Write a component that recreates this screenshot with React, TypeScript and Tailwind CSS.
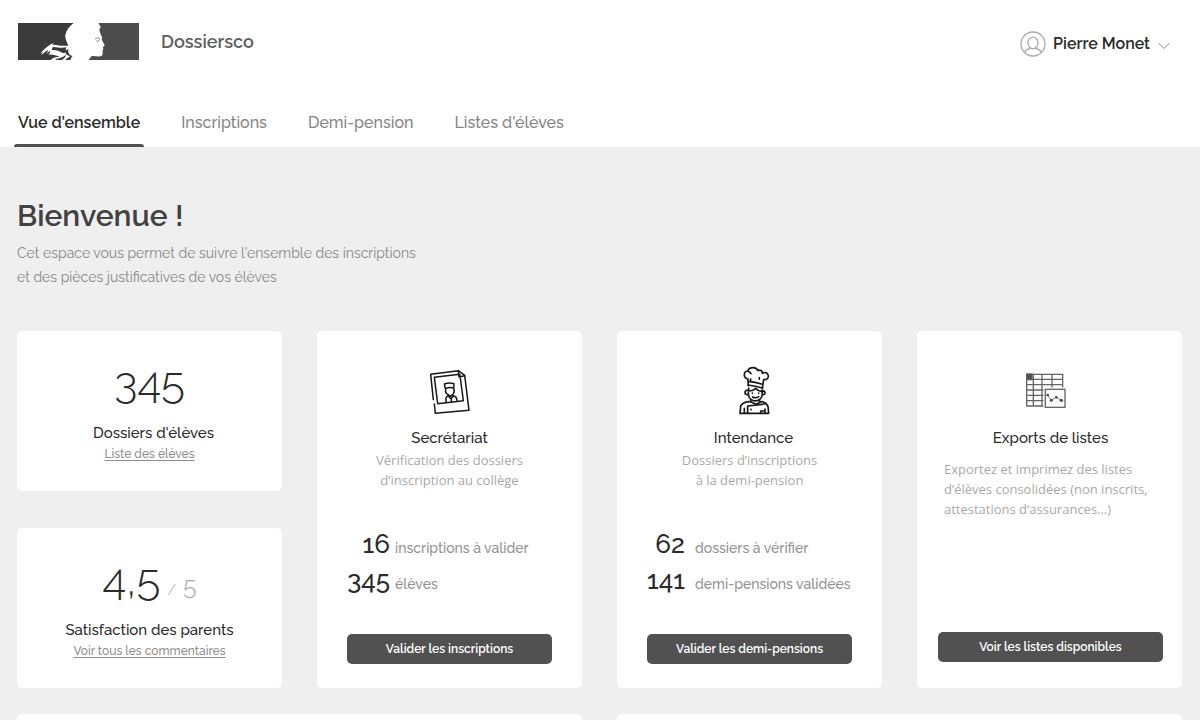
import type { ReactNode } from "react";

function Logo() {
  return (
    <svg viewBox="0 0 363 111" className="h-[37px] w-[121px]" role="img" aria-label="Marianne">
      <path fill="#3b3b3b" d="M0 0H167C155 9 145 22 142 36C141 48 146 56 150 65L148 69C140 67 133 69 126 68C117 65 109 65 103 65L107 60C94 64 81 76 67 91L75 87L69 97C77 90 86 83 91 80L86 92L96 83C98 89 93 92 91 95C104 94 116 97 125 102C113 101 103 105 98 111H0Z" />
      <path fill="#3b3b3b" d="M104 72C116 71 128 77 145 73C140 81 151 91 134 90C123 83 113 80 101 81ZM141 85L151 77C149 90 154 96 165 99C158 101 162 107 156 111H141C148 106 153 103 156 99C148 99 144 94 141 85ZM111 111C122 102 137 106 145 93C143 105 133 111 128 111Z" />
      <path fill="#4c4c4c" d="M242 0H363V111H212L221 99C231 98 242 102 250 99C256 96 252 90 255 84L252 82L257 79L254 75C254 71 260 70 260 66C257 61 253 55 251 49C255 43 248 37 247 31L244 20L248 12C247 7 242 6 242 0Z" />
      <path fill="none" stroke="#777777" strokeWidth="2.5" d="M231 48C237 44 241 45 246 46M235 53L240 56L244 49" />
    </svg>
  );
}

function UserIcon() {
  return (
    <svg viewBox="0 0 26 26" className="size-[26px]" fill="none" stroke="#aaaaaa" strokeWidth="1.3" aria-hidden="true">
      <circle cx="13" cy="13" r="12" />
      <ellipse cx="13" cy="12" rx="5" ry="5.8" />
      <path d="M4.8 21.5C5.5 18.6 8 18.2 10.5 17.2M21.2 21.5C20.5 18.6 18 18.2 15.5 17.2" />
    </svg>
  );
}

function PhotoIcon() {
  return (
    <svg viewBox="0 0 180 180" className="size-[60px]" fill="none" stroke="#171717" strokeWidth="4.5" strokeLinejoin="round" strokeLinecap="round" aria-hidden="true">
      <path d="M40 119L32 43L115 32L134 46L147 151L46 160L43 132" />
      <path d="M115 32L117 51L134 47" />
      <path d="M120 48L119 43L43 52L53 131L130 122L121 54" />
      <path d="M76 86L73 72Q88 67 102 71L101 84Q89 80 76 86ZM77 88Q75 99 84 104L92 109L100 101Q105 94 101 85" />
      <path d="M85 105L84 109Q75 110 79 127M98 105L100 108Q110 108 111 122M86 109L93 117L99 108M94 117V124" />
    </svg>
  );
}

function ChefIcon() {
  return (
    <svg viewBox="-15 0 180 180" className="size-[60px]" fill="none" stroke="#171717" strokeWidth="5" strokeLinejoin="round" strokeLinecap="round" aria-hidden="true">
      <path d="M70 77L69 57C54 54 55 34 68 33C73 35 76 37 78 41M68 33C73 20 94 19 99 32C104 28 113 32 112 40C127 30 137 52 124 58L116 59L112 85" />
      <path d="M77 57L77 61M103 53V58M71 64Q90 65 112 73M69 75Q90 78 113 84" />
      <path d="M71 84L70 101C71 130 111 130 112 101L111 90M69 90Q60 90 60 98Q60 105 70 104M112 92Q120 93 120 99Q120 105 112 104" />
      <path d="M73 92Q83 94 92 85Q101 95 110 94M82 99V100M101 99V100M83 111Q92 116 101 110" />
      <path d="M78 121L77 125Q55 124 47 138L45 160H131L129 139Q122 125 104 124L101 121M76 125L94 133L108 125" />
      <path d="M118 132L68 138V158M58 145V159M120 147V159M78 148V149M107 159V153H120" />
    </svg>
  );
}

function TableIcon() {
  return (
    <svg viewBox="7 0 180 180" className="size-[60px]" fill="none" stroke="#666666" strokeWidth="4" aria-hidden="true">
      <path d="M24 43H132V138H24ZM24 58H132M24 74H132M24 90H132M24 106H132M24 122H132M44 43V138M70 43V138M100 43V138" />
      <rect x="24" y="42" width="16" height="17" fill="#4d4d4d" />
      <rect x="77" y="85" width="65" height="60" fill="#fff" stroke="#fff" strokeWidth="5" />
      <rect x="80" y="88" width="59" height="54" fill="#fff" />
      <path d="M87 105L97 121L113 112L127 121" strokeWidth="2.5" />
      <g fill="#4d4d4d" stroke="none">
        <circle cx="87" cy="105" r="4" /><circle cx="98" cy="121" r="4.5" />
        <circle cx="113" cy="112" r="4" /><circle cx="128" cy="121" r="5" />
      </g>
    </svg>
  );
}

const tabs = ["Vue d'ensemble", "Inscriptions", "Demi-pension", "Listes d'élèves"];

function SummaryCard({ value, title, titleClass = "", link }: {
  value: ReactNode; title: string; titleClass?: string; link: string;
}) {
  return (
    <article className="flex h-40 flex-col items-center rounded-[5px] bg-white pt-[22px]">
      <p className="flex h-[60px] items-baseline gap-[7px] text-[44px] leading-[60px] font-light text-[#2b2b2b]">{value}</p>
      <h2 className={`mt-[10px] text-[15px] leading-5 font-medium text-[#2b2b2b] ${titleClass}`}>{title}</h2>
      <a href="#" className="text-[12px] leading-[22px] font-medium text-[#8f8f8f] underline underline-offset-2">{link}</a>
    </article>
  );
}

type Stat = { count: number; label: string };

function ServiceCard({ icon, title, titleClass = "", lines, stats, action, numberClass }: {
  icon: ReactNode; title: string; titleClass?: string; lines: string[]; stats: Stat[]; action: string; numberClass: string;
}) {
  return (
    <article className="flex flex-col rounded-[5px] bg-white px-[30px] pt-[29px] pb-6">
      <div className="flex flex-col items-center text-center">
        {icon}
        <h2 className={`mt-2 text-[15px] leading-5 font-medium text-[#2b2b2b] ${titleClass}`}>{title}</h2>
        <p className="mt-[2px] font-['Open_Sans','Noto_Sans',sans-serif] text-[13px] leading-5 text-[#a9a9a9]">
          {lines.map((line) => <span key={line} className="block">{line}</span>)}
        </p>
      </div>
      <dl className="mt-9 flex flex-col">
        {stats.map((stat) => (
          <div key={stat.label} className="flex h-9 flex-row-reverse items-baseline justify-end">
            <dt className="flex-1 text-[14px] leading-9 font-medium whitespace-nowrap text-[#929292]">{stat.label}</dt>
            <dd className={`w-12 shrink-0 text-right text-[26px] leading-9 font-medium text-[#2b2b2b] ${numberClass}`}>{stat.count}</dd>
          </div>
        ))}
      </dl>
      <button type="button" className="mt-auto h-[30px] rounded-[5px] bg-[#515151] text-[12px] font-semibold text-white">{action}</button>
    </article>
  );
}

export default function App() {
  return (
    <div className="flex min-h-screen flex-col bg-[#efefef] font-['Raleway','Lato',sans-serif]">
      <header className="bg-white">
        <div className="flex items-center justify-between pt-[23px] pr-[29px] pl-[18px]">
          <div className="flex items-center gap-[22px]">
            <Logo />
            <span className="text-[18px] leading-6 font-semibold text-[#5e5e5e]">Dossiersco</span>
          </div>
          <button type="button" className="flex items-center gap-[7px] pt-1 text-[16px] font-semibold text-[#2b2b2b]">
            <UserIcon />
            <span className="pt-px">Pierre Monet</span>
            <svg viewBox="0 0 14 14" className="size-[14px]" fill="none" stroke="#888888" aria-hidden="true">
              <path d="M1.5 6L7 11.5L12.5 6" />
            </svg>
          </button>
        </div>
        <nav className="mt-[37px] flex gap-[33px] pl-[14px]">
          {tabs.map((tab, i) => (
            <a key={tab} href="#" aria-current={i === 0 ? "page" : undefined}
              className={i === 0
                ? "flex h-[50px] flex-col px-1 text-[16px] leading-[52px] font-semibold text-[#2b2b2b]"
                : "flex h-[50px] flex-col px-1 text-[16px] leading-[52px] font-medium text-[#858585]"}>
              <span className="h-[47px]">{tab}</span>
              {i === 0 && <span className="-mx-1 h-[3px] rounded-t-[3px] bg-[#515151]" />}
            </a>
          ))}
        </nav>
      </header>
      <main className="flex flex-1 flex-col pr-[18px] pl-[17px]">
        <h1 className="mt-[49px] text-[30px] leading-10 font-semibold text-[#414141]">Bienvenue !</h1>
        <p className="mt-[5px] text-[14px] leading-6 text-[#888888]">
          Cet espace vous permet de suivre l'ensemble des inscriptions<br />et des pièces justificatives de vos élèves
        </p>
        <section className="mt-[42px] grid grid-cols-4 gap-[35px]">
          <div className="flex flex-col gap-[37px]">
            <SummaryCard value="345" title="Dossiers d'élèves" titleClass="pl-2" link="Liste des élèves" />
            <SummaryCard
              value={<><span>4,5</span><span className="text-[15px] leading-none text-[#aaaaaa]">/</span><span className="text-[25px] leading-none text-[#aaaaaa]">5</span></>}
              title="Satisfaction des parents" link="Voir tous les commentaires" />
          </div>
          <ServiceCard icon={<PhotoIcon />} title="Secrétariat" lines={["Vérification des dossiers", "d’inscription au collège"]}
            stats={[{ count: 16, label: "inscriptions à valider" }, { count: 345, label: "élèves" }]}
            action="Valider les inscriptions" numberClass="pr-[5px]" />
          <ServiceCard icon={<ChefIcon />} title="Intendance" titleClass="pl-2" lines={["Dossiers d’inscriptions", "à la demi-pension"]}
            stats={[{ count: 62, label: "dossiers à vérifier" }, { count: 141, label: "demi-pensions validées" }]}
            action="Valider les demi-pensions" numberClass="pr-[10px]" />
          <article className="flex flex-col rounded-[5px] bg-white pt-[29px] pr-[19px] pb-[26px] pl-[21px]">
            <div className="flex flex-col items-center">
              <TableIcon />
              <h2 className="mt-2 text-[15px] leading-5 font-medium text-[#2b2b2b]">Exports de listes</h2>
            </div>
            <p className="mt-[11px] pl-[6px] font-['Open_Sans','Noto_Sans',sans-serif] text-[13px] leading-5 whitespace-nowrap text-[#a9a9a9]">
              Exportez et imprimez des listes<br />d’élèves consolidées (non inscrits,<br />attestations d’assurances…)
            </p>
            <button type="button" className="mt-auto h-[30px] rounded-[5px] bg-[#515151] text-[12px] font-semibold text-white">Voir les listes disponibles</button>
          </article>
        </section>
        <section className="mt-[26px] grid flex-1 grid-cols-2 gap-[35px]">
          <div className="rounded-t-[5px] bg-white" />
          <div className="rounded-t-[5px] bg-white" />
        </section>
      </main>
    </div>
  );
}
